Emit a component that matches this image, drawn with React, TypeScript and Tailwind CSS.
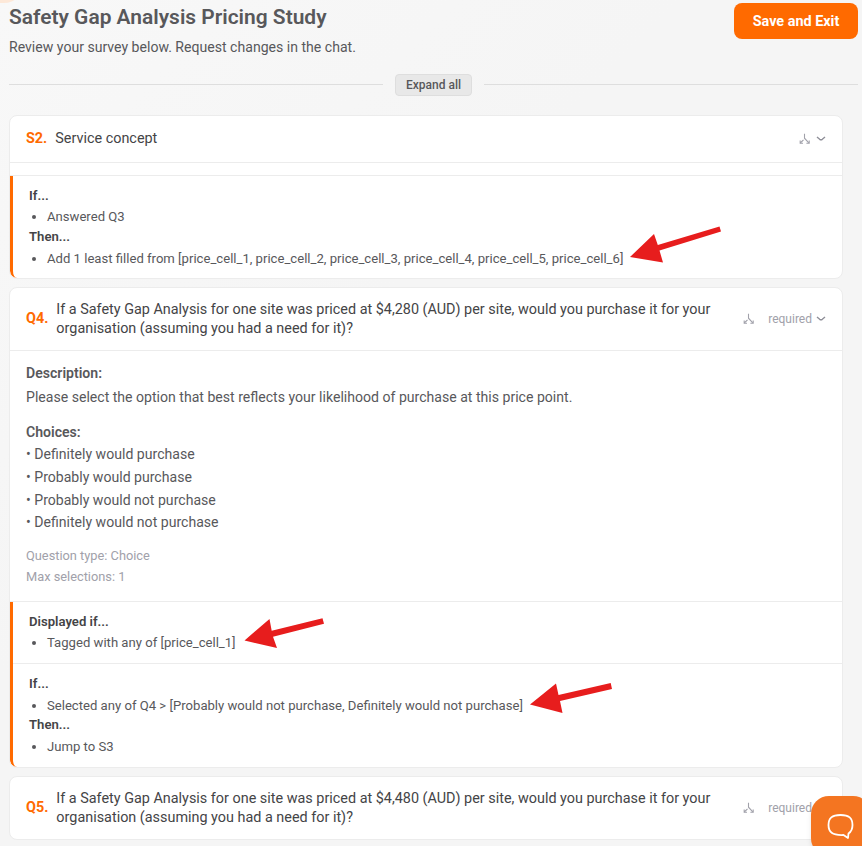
import React from "react";

const SplitIcon: React.FC = () => (
  <svg width="12" height="12" viewBox="0 0 12 12" fill="none" stroke="#a1a1aa" strokeWidth="1.1">
    <path d="M5.5 .8v4.4L9.800 9.800M4.500 6.800L1.200 10" />
    <path d="M1.200 7.500v2.800H4M10.200 7.500v2.800H7.400" />
  </svg>
);

const ChevronIcon: React.FC = () => (
  <svg width="10" height="10" viewBox="0 0 10 10" fill="none" stroke="#8f8f98" strokeWidth="1.4">
    <path d="M1 3L3.700 5.300Q5 6.200 6.300 5.300L9 3" />
  </svg>
);

interface HeaderProps {
  id: string;
  title: string;
  required?: boolean;
}

const CardHeader: React.FC<HeaderProps> = ({ id, title, required }) => (
  <div className={`flex items-center px-4 ${required ? "h-[62px]" : "h-[46px] pb-px"}`}>
    <span
      className={`shrink-0 text-[14.4px] font-bold leading-[19px] text-[#ff6a00] ${required ? "mb-[2px]" : ""}`}
    >
      {id}
    </span>
    <p className="ml-2 w-[670px] text-[14.4px] leading-[19px] text-[#444446]">{title}</p>
    <div className="ml-auto flex items-center text-xs text-[#a1a1aa]">
      <SplitIcon />
      {required && <span className="ml-[13px]">required</span>}
      <span className={required ? "ml-1" : "ml-[5px]"}>
        <ChevronIcon />
      </span>
    </div>
  </div>
);

interface RuleProps {
  label: string;
  item: string;
}

// One condition or action with its single bullet
const Rule: React.FC<RuleProps> = ({ label, item }) => (
  <div className="text-[13.12px]">
    <p className="font-semibold leading-[19px] text-[#444446]">{label}</p>
    <ul className="-mb-[0.1px] mt-[2.3px] list-disc pl-[18px] leading-[20px] text-[#58585b]">
      <li>{item}</li>
    </ul>
  </div>
);

interface ArrowProps {
  className: string;
  points: string;
}

const Arrow: React.FC<ArrowProps> = ({ className, points }) => (
  <svg className={`absolute ${className}`} width="96" height="42" viewBox="0 0 96 42">
    <polygon points={points} fill="#e71d1d" />
  </svg>
);

const choices = [
  "Definitely would purchase",
  "Probably would purchase",
  "Probably would not purchase",
  "Definitely would not purchase",
];

const question = (price: string) =>
  `If a Safety Gap Analysis for one site was priced at ${price} (AUD) per site, would you purchase it for your organisation (assuming you had a need for it)?`;

const App: React.FC = () => {
  return (
    <div className="relative h-[846px] w-[862px] overflow-hidden bg-[linear-gradient(135deg,#f8f8f8,#f5f5f5_40%,#f5f5f5)] pl-[9px] font-[Roboto,sans-serif] text-[#58585b]">
      <div className="absolute -left-6 -top-[37px] h-10 w-12 rounded-full bg-[#fde8d8]" />

      {/* Title bar */}
      <header className="flex h-[72px] justify-between pr-1 pt-[3px]">
        <div>
          <h1 className="text-[20.95px] font-semibold leading-7">
            Safety Gap Analysis Pricing Study
          </h1>
          <p className="mt-[6px] text-[14.08px] leading-5">
            Review your survey below. Request changes in the chat.
          </p>
        </div>
        <button className="h-9 w-[124px] rounded-lg bg-[#ff6a00] pt-px text-[14.4px] font-bold text-white">
          Save and Exit
        </button>
      </header>

      <div className="flex h-[26px] items-center gap-3 pr-1">
        <div className="mb-[2px] h-px flex-1 bg-[#dedede]" />
        <button className="h-[22px] w-[77px] rounded border border-[#dedede] bg-[#e8e8e8] text-xs font-medium">
          Expand all
        </button>
        <div className="mb-[2px] h-px flex-1 bg-[#dedede]" />
      </div>

      <main className="mt-[17px] flex w-[834px] flex-col gap-2">
        {/* Service concept */}
        <section className="overflow-hidden rounded-lg border border-[#ececec] bg-white">
          <CardHeader id="S2." title="Service concept" />
          <div className="h-[13px] border-t border-[#ececec]" />
          <div className="h-px bg-[#ececec]" />
          <div className="h-[102px] rounded-bl-[7px] border-l-[3px] border-[#ff6a00] px-4 pt-[10px]">
            <Rule label="If..." item="Answered Q3" />
            <Rule
              label="Then..."
              item="Add 1 least filled from [price_cell_1, price_cell_2, price_cell_3, price_cell_4, price_cell_5, price_cell_6]"
            />
          </div>
        </section>

        {/* First price point */}
        <section className="overflow-hidden rounded-lg border border-[#ececec] bg-white">
          <CardHeader id="Q4." title={question("$4,280")} required />
          <div className="h-[251px] border-t border-[#ececec] px-4 pt-[11px] text-[14.08px]">
            <p className="font-semibold leading-[22px]">Description:</p>
            <p className="mt-[2px] leading-[22px]">
              Please select the option that best reflects your likelihood of purchase at this price point.
            </p>
            <p className="mt-[13px] font-semibold leading-[22px]">Choices:</p>
            <div className="mt-[0.48px] leading-[22.53px]">
              {choices.map((choice) => (
                <p key={choice}>• {choice}</p>
              ))}
            </div>
            <div className="mt-[11.2px] text-[12.8px] leading-[21px] text-[#a1a1aa]">
              <p>Question type: Choice</p>
              <p>Max selections: 1</p>
            </div>
          </div>
          <div className="h-px bg-[#ececec]" />
          <div className="rounded-bl-[7px] border-l-[3px] border-[#ff6a00]">
            <div className="h-[61px] px-4 pt-[10px]">
              <Rule label="Displayed if..." item="Tagged with any of [price_cell_1]" />
            </div>
            <div className="h-[104px] border-t border-t-[#ececec] px-4 pt-[10.25px]">
              <Rule
                label="If..."
                item="Selected any of Q4 > [Probably would not purchase, Definitely would not purchase]"
              />
              <Rule label="Then..." item="Jump to S3" />
            </div>
          </div>
        </section>

        <section className="overflow-hidden rounded-lg border border-[#ececec] bg-white">
          <CardHeader id="Q5." title={question("$4,480")} required />
        </section>
      </main>

      {/* Callout arrows */}
      <Arrow
        className="left-[628px] top-[224px]"
        points="2,33 26,10 29.8,21 91.5,2.5 93,7.5 31.5,26.5 35,38.5"
      />
      <Arrow
        className="left-[242px] top-[610px]"
        points="2.5,30.5 27.5,9 29.7,20.7 80.5,8.2 82,13.8 31,26.7 35,38"
      />
      <Arrow
        className="left-[528px] top-[676px]"
        points="2,28.5 28,7.5 30.5,19 82.7,7 84,13 32,25 34.5,37"
      />

      {/* Chat launcher */}
      <button className="absolute left-[811px] top-[796px] h-[60px] w-[60px] rounded-[18px] bg-[#f47521] shadow-md">
        <svg className="absolute left-4 top-4" width="28" height="30" viewBox="0 0 28 30" fill="none" stroke="white" strokeWidth="1.8">
          <path d="M13.5 3C22 3 25.5 6 25.5 13c0 4-1 6.500-4 8.500l-.5 4.500-4.500-3C5 23.500 1.500 20 1.500 13S5 3 13.500 3z" strokeLinejoin="round" />
        </svg>
      </button>
    </div>
  );
};

export default App;
